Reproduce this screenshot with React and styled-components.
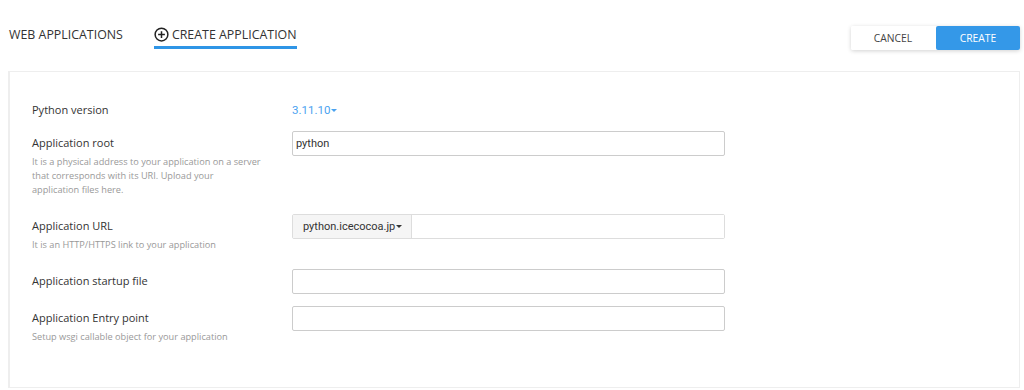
import React from "react";
import styled, { createGlobalStyle } from "styled-components";

const GlobalStyle = createGlobalStyle`
  body {
    margin: 0;
    background: #fff;
    font-family: "Open Sans", "Liberation Sans", sans-serif;
    color: #333;
  }
`;

const rows = [
  { label: "Application root", hint: ["It is a physical address to your application on a server", "that corresponds with its URI. Upload your", "application files here."], kind: "text", value: "python" },
  { label: "Application URL", hint: ["It is an HTTP/HTTPS link to your application"], kind: "url" },
  { label: "Application startup file", kind: "text" },
  { label: "Application Entry point", hint: ["Setup wsgi callable object for your application"], kind: "text" },
];

const PlusCircle = () => (
  <svg width="15" height="15" viewBox="0 0 16 16" fill="none" stroke="#222" strokeWidth="1.6">
    <circle cx="8" cy="8" r="6.8" />
    <path d="M8 4.4v7.2M4.4 8h7.2" />
  </svg>
);

const App = () => {
  return (
    <>
      <GlobalStyle />
      <Header>
        <Tabs>
          <Tab>WEB APPLICATIONS</Tab>
          <Tab active>
            <PlusCircle />
            CREATE APPLICATION
          </Tab>
        </Tabs>
        <Actions>
          <Button>CANCEL</Button>
          <Button primary>CREATE</Button>
        </Actions>
      </Header>
      <Panel>
        <Row>
          <LabelCol>
            <Label>Python version</Label>
          </LabelCol>
          <Version>
            3.11.10
            <Caret />
          </Version>
        </Row>
        {rows.map((r) => (
          <Row key={r.label}>
            <LabelCol>
              <Label tall>{r.label}</Label>
              {r.hint && (
                <Hint>
                  {r.hint.map((line) => (
                    <div key={line}>{line}</div>
                  ))}
                </Hint>
              )}
            </LabelCol>
            {r.kind === "url" ? (
              <InputGroup>
                <Addon>
                  python.icecocoa.jp
                  <Caret dark />
                </Addon>
                <GroupInput />
              </InputGroup>
            ) : (
              <Input defaultValue={r.value || ""} />
            )}
          </Row>
        ))}
      </Panel>
    </>
  );
};

export default App;

const Header = styled.div`
  height: 71px;
  display: flex;
  justify-content: space-between;
  align-items: flex-start;
  padding: 0 4px 0 9px;
`;

const Tabs = styled.div`
  display: flex;
  gap: 31px;
  padding-top: 25px;
`;

const Tab = styled.div`
  display: flex;
  align-items: center;
  gap: 3px;
  height: 18px;
  font-size: 12.4px;
  color: #333;
  padding-bottom: ${(p) => (p.active ? "3px" : "0")};
  border-bottom: ${(p) => (p.active ? "3px solid #2f95e6" : "none")};
`;

const Actions = styled.div`
  display: flex;
  margin-top: 26px;
  box-shadow: 0 1px 4px rgba(0, 0, 0, 0.18);
  border-radius: 2px;
`;

const Button = styled.button`
  width: 84px;
  height: 24px;
  border: none;
  border-radius: 2px;
  font-family: "Open Sans", "Liberation Sans", sans-serif;
  font-size: 10.3px;
  cursor: pointer;
  background: ${(p) => (p.primary ? "#3498e8" : "#fff")};
  color: ${(p) => (p.primary ? "#fff" : "#444")};
  margin-left: ${(p) => (p.primary ? "1px" : "0")};
`;

const Panel = styled.div`
  margin: 0 4px 0 8px;
  border: 1px solid #eee;
  border-left: 2px solid #eee;
  padding: 29px 0 38px 22px;
  display: flex;
  flex-direction: column;
  gap: 12px;
`;

const Row = styled.div`
  display: flex;
  align-items: flex-start;
`;

const LabelCol = styled.div`
  width: 260px;
  flex-shrink: 0;
`;

const Label = styled.div`
  font-size: 11px;
  line-height: ${(p) => (p.tall ? "24px" : "18px")};
  color: #333;
`;

const Hint = styled.div`
  font-size: 9.2px;
  line-height: 14px;
  color: #999;
  padding-bottom: 5px;
`;

const Version = styled.div`
  display: flex;
  align-items: center;
  font-family: Roboto, "Liberation Sans", sans-serif;
  font-size: 11.5px;
  line-height: 18px;
  color: #4aa2f0;
`;

const Caret = styled.span`
  width: 0;
  height: 0;
  border-left: 3px solid transparent;
  border-right: 3px solid transparent;
  border-top: 3px solid ${(p) => (p.dark ? "#333" : "#4aa2f0")};
  margin-left: 1px;
`;

const Input = styled.input`
  box-sizing: border-box;
  width: 433px;
  height: 25px;
  border: 1px solid #ccc;
  border-radius: 2px;
  padding: 0 3px;
  font-family: Roboto, "Liberation Sans", sans-serif;
  font-size: 11px;
  color: #333;
  outline: none;
`;

const InputGroup = styled.div`
  box-sizing: border-box;
  width: 433px;
  height: 25px;
  display: flex;
  border: 1px solid #ddd;
  border-radius: 2px;
`;

const Addon = styled.div`
  box-sizing: border-box;
  display: flex;
  align-items: center;
  padding: 0 10px;
  width: 119px;
  flex-shrink: 0;
  background: #f5f5f5;
  border-right: 1px solid #ddd;
  font-family: Roboto, "Liberation Sans", sans-serif;
  font-size: 11px;
  color: #333;
`;

const GroupInput = styled.input`
  flex: 1;
  min-width: 0;
  border: none;
  outline: none;
  background: #fff;
`;
